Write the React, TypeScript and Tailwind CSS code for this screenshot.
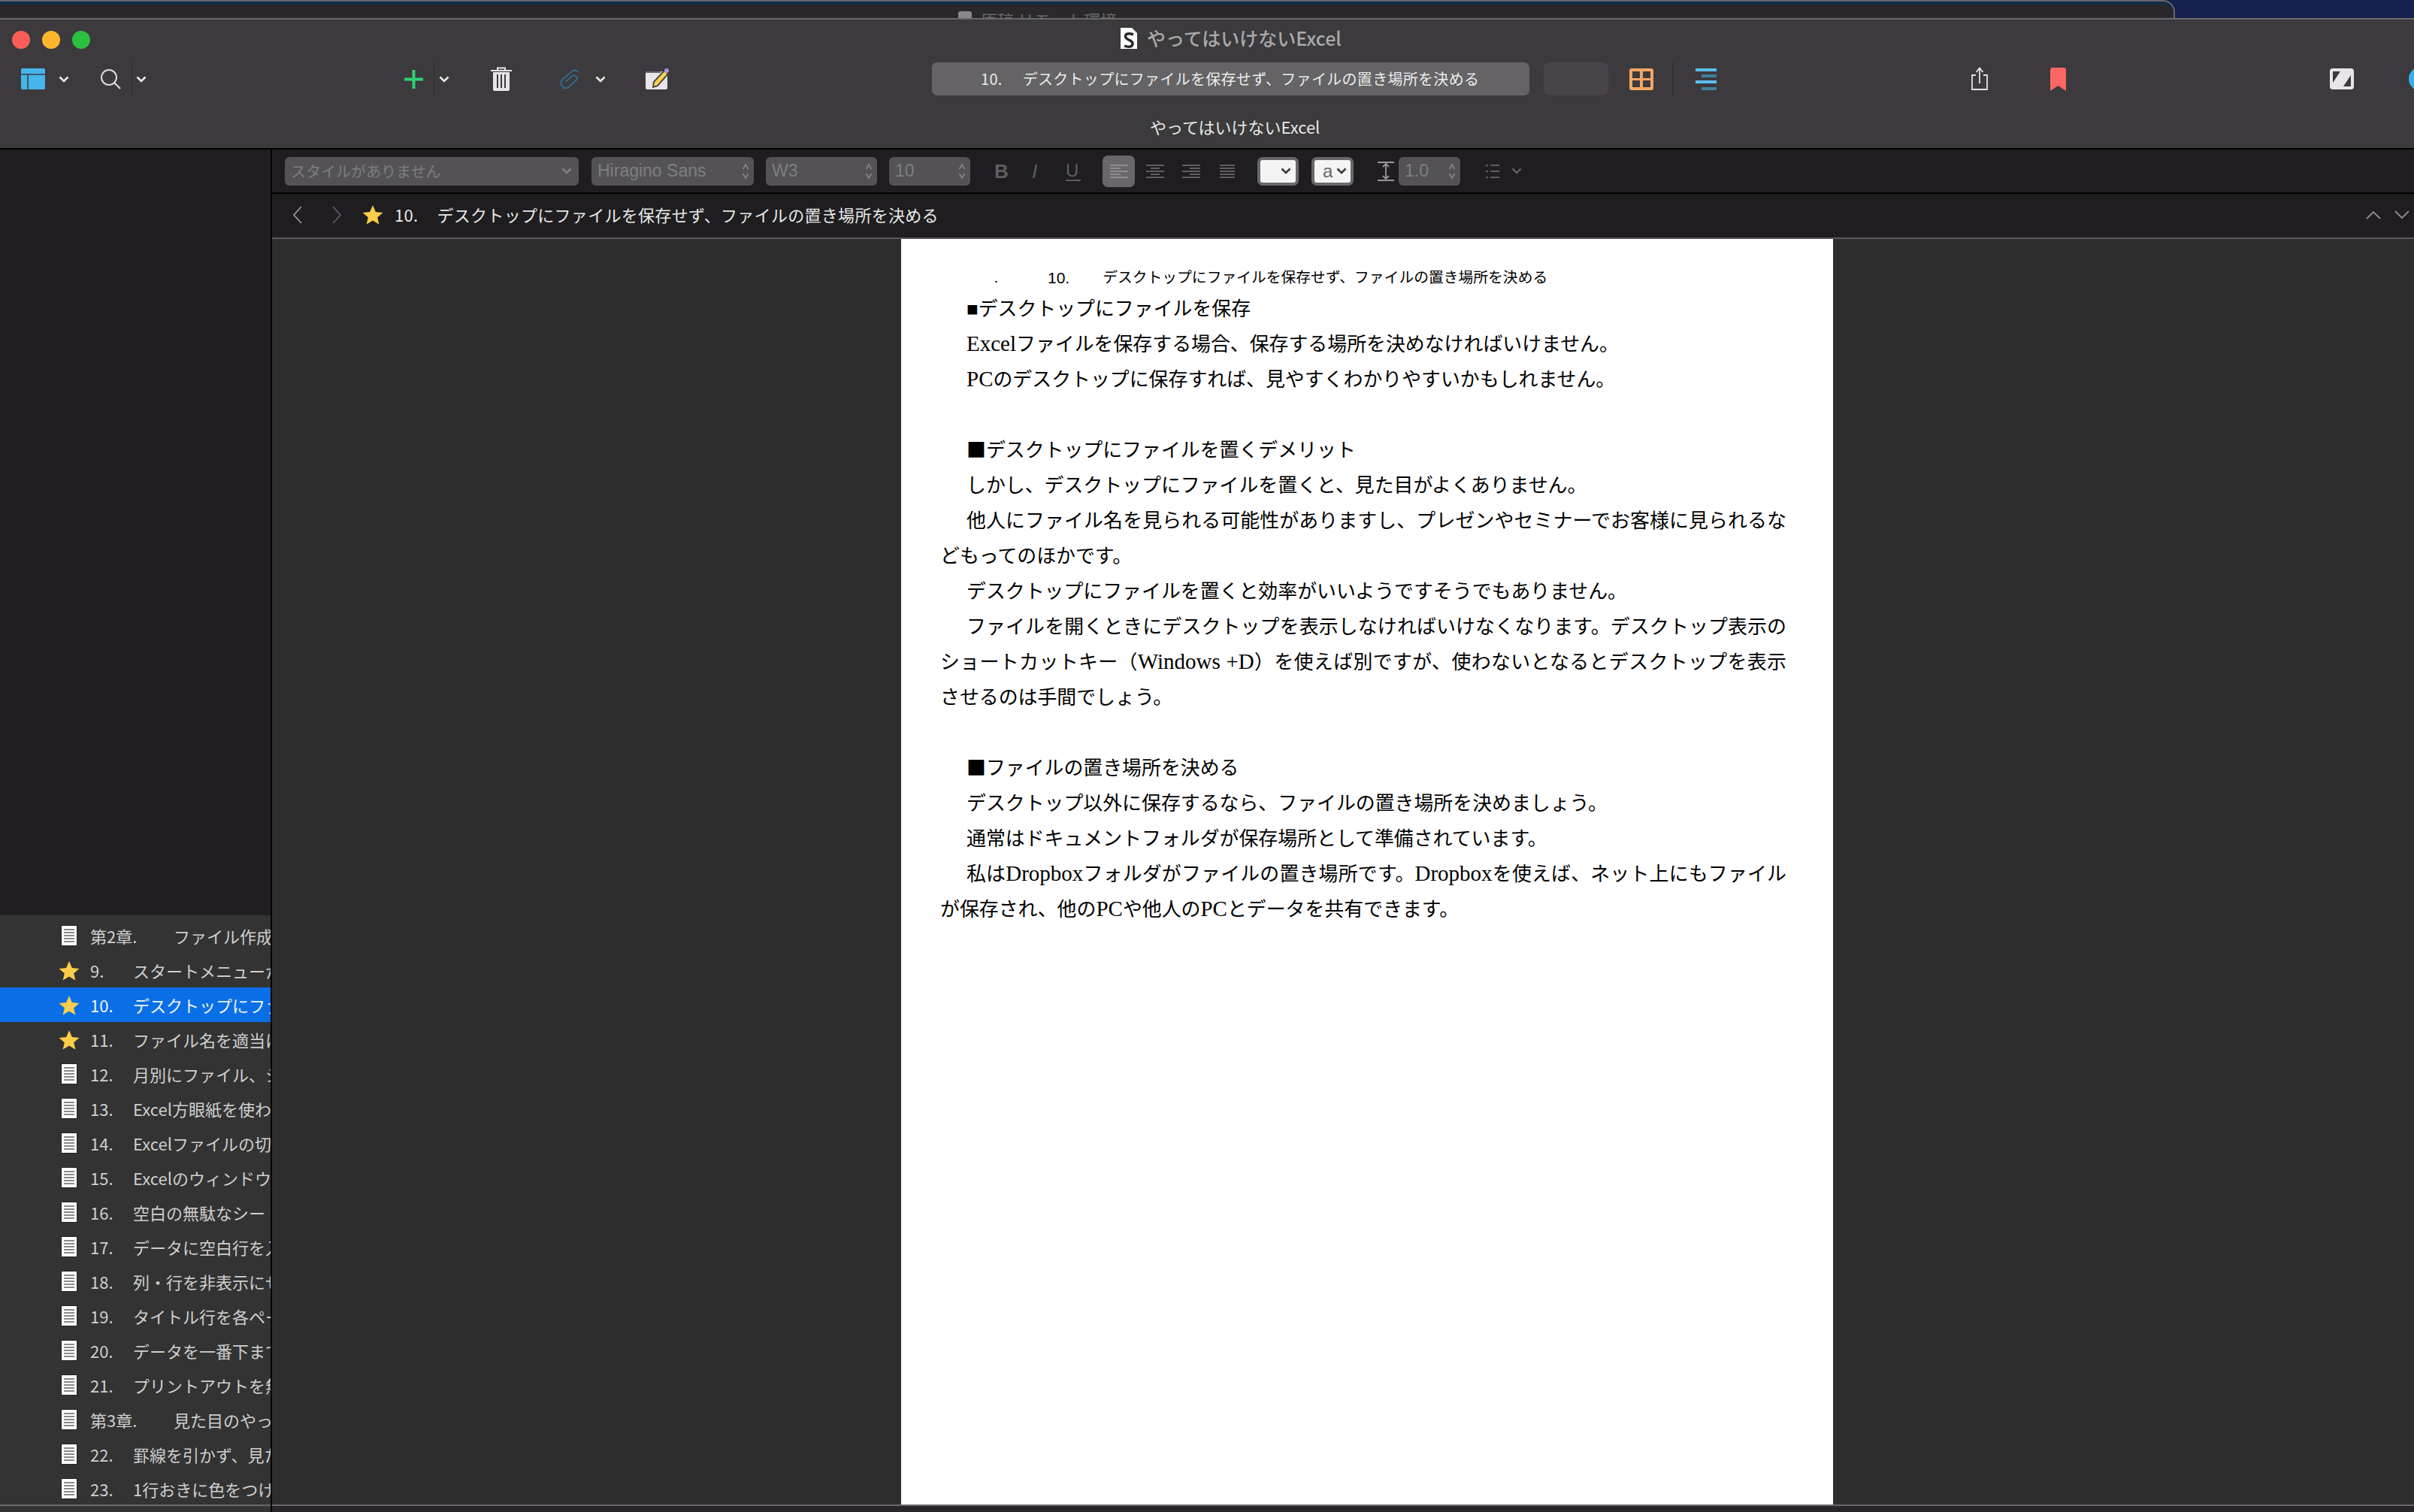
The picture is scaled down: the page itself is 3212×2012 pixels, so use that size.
import type { ReactNode } from "react";

const UI_FONT = "font-['Noto_Sans_CJK_JP',sans-serif]";

type Row = { num: string; title: string; star?: boolean; selected?: boolean; chapter?: boolean };

const rows: Row[] = [
  { num: "第2章.", title: "ファイル作成のルール", chapter: true },
  { num: "9.", title: "スタートメニューから", star: true },
  { num: "10.", title: "デスクトップにファイルを", star: true, selected: true },
  { num: "11.", title: "ファイル名を適当につけ", star: true },
  { num: "12.", title: "月別にファイル、シート" },
  { num: "13.", title: "Excel方眼紙を使わない" },
  { num: "14.", title: "Excelファイルの切り替え" },
  { num: "15.", title: "Excelのウィンドウを" },
  { num: "16.", title: "空白の無駄なシートを" },
  { num: "17.", title: "データに空白行を入れ" },
  { num: "18.", title: "列・行を非表示にせず" },
  { num: "19.", title: "タイトル行を各ページ" },
  { num: "20.", title: "データを一番下まで" },
  { num: "21.", title: "プリントアウトを無駄に" },
  { num: "第3章.", title: "見た目のやっつけ", chapter: true },
  { num: "22.", title: "罫線を引かず、見た目" },
  { num: "23.", title: "1行おきに色をつけ" },
];

function Chevron({ className = "", color = "#e8e8e8" }: { className?: string; color?: string }) {
  return (
    <svg viewBox="0 0 14 9" className={"h-[9px] w-[14px] shrink-0 " + className}>
      <path d="M1.5 1.5 7 7l5.500-5.500" fill="none" stroke={color} strokeWidth="2.600" />
    </svg>
  );
}

function UpDown({ className = "" }: { className?: string }) {
  return (
    <svg viewBox="0 0 10 24" className={"h-[24px] w-[10px] shrink-0 " + className}>
      <path d="M1.500 9 5 3l3.500 6M1.500 15 5 21l3.500-6" fill="none" stroke="#858387" strokeWidth="1.800" />
    </svg>
  );
}

function Divider({ className = "" }: { className?: string }) {
  return <div className={"h-[46px] w-px shrink-0 bg-[#2f2d30] " + className} />;
}

function Star({ className = "" }: { className?: string }) {
  return (
    <svg viewBox="0 0 30 28" className={"h-[27px] w-[30px] shrink-0 " + className}>
      <path
        d="M15 1l4 9.400 10 .9-7.600 6.500 2.300 9.700L15 22.400 6.300 27.500l2.300-9.700L1 11.300l10-.9z"
        fill="#fbcd4b"
      />
    </svg>
  );
}

function DocIcon() {
  return (
    <div className="flex h-[28px] w-[22px] shrink-0 flex-col justify-center gap-[2px] border border-[#222] bg-white px-[3px]">
      <div className="h-[2px] bg-[#8a8a8a]" />
      <div className="h-[2px] bg-[#8a8a8a]" />
      <div className="h-[2px] bg-[#8a8a8a]" />
      <div className="h-[2px] bg-[#8a8a8a]" />
      <div className="h-[2px] bg-[#8a8a8a]" />
    </div>
  );
}

function Field({ w, ml, children }: { w: string; ml: string; children: ReactNode }) {
  return (
    <div
      className={
        "flex h-[38px] shrink-0 items-center justify-between rounded-[6px] bg-[#545256] pl-[8px] pr-[6px] text-[23px] leading-none text-[#7f7d82] " +
        w +
        " " +
        ml
      }
    >
      {children}
    </div>
  );
}

function AlignIcon({ lines, className = "" }: { lines: string[]; className?: string }) {
  // each entry holds the width of one stroke
  return (
    <div className={"flex h-[18px] shrink-0 flex-col justify-between " + className}>
      {lines.map((l, i) => (
        <div key={i} className={"h-[2px] bg-[#5f5d61] " + l} />
      ))}
    </div>
  );
}

function SidebarRow({ row }: { row: Row }) {
  return (
    <div
      className={
        "flex h-[46px] shrink-0 items-center whitespace-nowrap text-[22px] " +
        (row.selected ? "bg-[#0a6fe6] text-[#f0f4fa]" : "text-[#cfcfcf]")
      }
    >
      <div className="ml-[76px] flex w-[32px] shrink-0 justify-center">
        {row.star ? <Star /> : <DocIcon />}
      </div>
      <span className={"ml-[12px] shrink-0 " + (row.chapter ? "w-[111px]" : "w-[57px]")}>{row.num}</span>
      <span className="shrink-0">{row.title}</span>
    </div>
  );
}

function Toolbar() {
  return (
    <div className="flex h-[44px] items-center pl-[28px]">
      <svg viewBox="0 0 32 28" className="h-[28px] w-[32px] shrink-0">
        <rect width="32" height="28" rx="2" fill="#45b5ec" />
        <path d="M0 8h32M9 8v20" stroke="#3c3a3c" strokeWidth="1.500" />
      </svg>
      <Chevron className="ml-[18px]" />
      <svg viewBox="0 0 28 28" className="ml-[41px] h-[28px] w-[28px] shrink-0">
        <circle cx="12" cy="12" r="10" fill="none" stroke="#dedcde" strokeWidth="2" />
        <path d="M19 19l8 8" stroke="#dedcde" strokeWidth="2.200" />
      </svg>
      <Divider className="ml-[14px]" />
      <Chevron className="ml-[5px]" />
      <svg viewBox="0 0 25 25" className="ml-[343px] h-[25px] w-[25px] shrink-0">
        <path d="M12.500 0v25M0 12.500h25" stroke="#2fcf73" strokeWidth="4" />
      </svg>
      <Divider className="ml-[14px]" />
      <Chevron className="ml-[6px]" />
      <svg viewBox="0 0 28 32" className="ml-[55px] h-[32px] w-[28px] shrink-0">
        <path d="M9 4V1.500h10V4M0 5h28" fill="none" stroke="#e6e4e6" strokeWidth="2" />
        <path d="M3 7h22v23a2 2 0 0 1-2 2H5a2 2 0 0 1-2-2z" fill="#e6e4e6" />
        <path d="M9 10v18M14 10v18M19 10v18" stroke="#3c3a3c" strokeWidth="2" />
      </svg>
      <svg viewBox="0 0 28 28" className="ml-[64px] h-[28px] w-[28px] shrink-0">
        <path
          d="M24 5c-2-3-5-3.500-8-1L4 14c-3 3-3 7-1 10s6 3 9 .5l9-8c2-2 2-4.500.5-6s-3.500-1.500-5.500 0l-8 7"
          fill="none"
          stroke="#33688a"
          strokeWidth="2.200"
        />
      </svg>
      <Chevron className="ml-[19px]" />
      <svg viewBox="0 0 32 28" className="ml-[53px] h-[28px] w-[32px] shrink-0">
        <path d="M0 4h23L11 18l-1 7 6-2 13-15v18a2 2 0 0 1-2 2H2a2 2 0 0 1-2-2z" fill="#e8e6e8" />
        <path d="M0 5h20" stroke="#3c3a3c" strokeWidth="1.500" />
        <path d="M25 3l5 4-14 16-6 2 1-7z" fill="#f5d04f" stroke="#3c3a3c" strokeWidth="1.800" />
        <circle cx="28" cy="3" r="3" fill="#b58ae6" />
      </svg>

      <div className="ml-[349px] flex h-[44px] w-[795px] shrink-0 items-center rounded-[7px] bg-[#656366] pl-[65px] text-[20px] tracking-[0.3px] text-[#ececec]">
        <span>10.</span>
        <span className="ml-[27px]">デスクトップにファイルを保存せず、ファイルの置き場所を決める</span>
      </div>
      <div className="ml-[19px] h-[44px] w-[86px] shrink-0 rounded-[7px] bg-[#474548]" />

      <svg viewBox="0 0 32 29" className="ml-[28px] h-[29px] w-[32px] shrink-0">
        <rect width="32" height="29" rx="3" fill="#f3a564" />
        <rect x="4" y="4" width="10" height="9" fill="#3c3a3c" />
        <rect x="18" y="4" width="10" height="9" fill="#3c3a3c" />
        <rect x="4" y="16" width="10" height="9" fill="#3c3a3c" />
        <rect x="18" y="16" width="10" height="9" fill="#3c3a3c" />
      </svg>
      <Divider className="ml-[25px]" />
      <svg viewBox="0 0 28 29" className="ml-[30px] h-[29px] w-[28px] shrink-0">
        <rect y="0" width="28" height="4" fill="#5cc0ee" />
        <rect x="8" y="8" width="20" height="4" fill="#447f9e" />
        <rect y="16" width="28" height="4" fill="#5cc0ee" />
        <rect x="8" y="25" width="20" height="4" fill="#447f9e" />
      </svg>
      <svg viewBox="0 0 24 32" className="ml-[338px] h-[32px] w-[24px] shrink-0">
        <path
          d="M7 11H2v19h20V11h-5M12 22V2M7.500 7 12 1.500 16.500 7"
          fill="none"
          stroke="#e4e2e4"
          strokeWidth="1.800"
        />
      </svg>
      <svg viewBox="0 0 21 31" className="ml-[82px] h-[31px] w-[21px] shrink-0">
        <path d="M3 0h15a3 3 0 0 1 3 3v28l-10.500-7L0 31V3a3 3 0 0 1 3-3z" fill="#fb6764" />
      </svg>
      <svg viewBox="0 0 32 28" className="ml-[351px] h-[28px] w-[32px] shrink-0">
        <rect width="32" height="28" rx="4" fill="#e8e6e8" />
        <path d="M4 4h10L4 19zM28 24H18L28 9z" fill="#3c3a3c" />
      </svg>
      <div className="ml-[73px] h-[32px] w-[32px] shrink-0 rounded-full bg-[#38aeea]" />
    </div>
  );
}

function FormatBar() {
  return (
    <div className="flex h-[57px] shrink-0 items-center bg-[#1f1d20] pl-[17px] font-['Liberation_Sans',sans-serif]">
      <Field w="w-[391px]" ml="">
        <span className={UI_FONT + " text-[20px]"}>スタイルがありません</span>
        <Chevron color="#858387" className="mr-[3px]" />
      </Field>
      <Field w="w-[216px]" ml="ml-[17px]">
        <span>Hiragino Sans</span>
        <UpDown />
      </Field>
      <Field w="w-[148px]" ml="ml-[16px]">
        <span>W3</span>
        <UpDown />
      </Field>
      <Field w="w-[108px]" ml="ml-[16px]">
        <span>10</span>
        <UpDown />
      </Field>
      <span className="ml-[32px] w-[20px] shrink-0 text-[26px] font-bold leading-none text-[#5f5d61]">B</span>
      <span className="ml-[30px] w-[16px] shrink-0 text-[26px] italic leading-none text-[#5f5d61]">I</span>
      <span className="ml-[29px] w-[20px] shrink-0 border-b-2 border-[#5f5d61] text-[24px] leading-none text-[#5f5d61]">U</span>
      <div className="ml-[29px] flex h-[42px] w-[43px] shrink-0 items-center justify-center rounded-[7px] bg-[#69676b]">
        <AlignIcon
          className="w-[24px] [&>div]:bg-[#8f8d91]"
          lines={["w-full", "w-[14px]", "w-full", "w-[14px]", "w-full"]}
        />
      </div>
      <AlignIcon
        className="ml-[15px] w-[24px] items-center"
        lines={["w-full", "w-[12px]", "w-full", "w-[12px]", "w-full"]}
      />
      <AlignIcon
        className="ml-[24px] w-[24px] items-end"
        lines={["w-full", "w-[14px]", "w-full", "w-[14px]", "w-full"]}
      />
      <AlignIcon
        className="ml-[26px] w-[20px]"
        lines={["w-full", "w-full", "w-full", "w-full", "w-full"]}
      />
      <div className="ml-[30px] flex h-[38px] w-[55px] shrink-0 items-center justify-end rounded-[7px] border-[4px] border-[#69676b] bg-[#f4f4f4] pr-[6px]">
        <Chevron color="#3a383b" className="h-[7px] w-[11px]" />
      </div>
      <div className="ml-[17px] flex h-[38px] w-[56px] shrink-0 items-center justify-between rounded-[7px] border-[4px] border-[#69676b] bg-[#f4f4f4] pl-[11px] pr-[5px]">
        <span className="text-[24px] leading-none text-[#69676b]">a</span>
        <Chevron color="#3a383b" className="h-[7px] w-[11px]" />
      </div>
      <svg viewBox="0 0 22 26" className="ml-[32px] h-[26px] w-[22px] shrink-0">
        <path d="M0 1h22M0 25h22M11 3v20M7 7l4-4 4 4M7 19l4 4 4-4" fill="none" stroke="#9a989c" strokeWidth="1.800" />
      </svg>
      <Field w="w-[82px]" ml="ml-[6px]">
        <span>1.0</span>
        <UpDown />
      </Field>
      <svg viewBox="0 0 18 22" className="ml-[34px] h-[22px] w-[18px] shrink-0">
        <path d="M6 3h12M6 11h12M6 19h12" stroke="#5f5d61" strokeWidth="2" />
        <circle cx="1.500" cy="3" r="1.500" fill="#5f5d61" />
        <circle cx="1.500" cy="11" r="1.500" fill="#5f5d61" />
        <circle cx="1.500" cy="19" r="1.500" fill="#5f5d61" />
      </svg>
      <Chevron color="#5f5d61" className="ml-[16px]" />
    </div>
  );
}

function NavBar() {
  return (
    <div className={"flex h-[58px] shrink-0 items-center bg-[#1f1d20] pb-[3px] text-[22px] tracking-[0.3px] text-[#e8e8e8] " + UI_FONT}>
      <svg viewBox="0 0 14 24" className="ml-[27px] h-[24px] w-[14px] shrink-0">
        <path d="M12 1 2 12l10 11" fill="none" stroke="#9a989c" strokeWidth="1.800" />
      </svg>
      <svg viewBox="0 0 14 24" className="ml-[38px] h-[24px] w-[14px] shrink-0">
        <path d="M2 1l10 11L2 23" fill="none" stroke="#5f5d61" strokeWidth="1.800" />
      </svg>
      <Star className="ml-[26px]" />
      <span className="ml-[14px] shrink-0">10.</span>
      <span className="ml-[25px] shrink-0">デスクトップにファイルを保存せず、ファイルの置き場所を決める</span>
      <svg viewBox="0 0 20 12" className="ml-[1899px] h-[12px] w-[20px] shrink-0">
        <path d="M1 11l9-9 9 9" fill="none" stroke="#8f8d91" strokeWidth="1.800" />
      </svg>
      <svg viewBox="0 0 20 12" className="ml-[18px] h-[12px] w-[20px] shrink-0">
        <path d="M1 1l9 9 9-9" fill="none" stroke="#8f8d91" strokeWidth="1.800" />
      </svg>
    </div>
  );
}

function Para({ children }: { children?: ReactNode }) {
  return <p className="min-h-[47px] text-justify [text-indent:35px]">{children}</p>;
}

// Latin words sit a little larger than the kana around them
function L({ children }: { children: ReactNode }) {
  return <span className="text-[29px] leading-none">{children}</span>;
}

function Square() {
  return <span className={UI_FONT + " leading-none"}>■</span>;
}

function Page() {
  return (
    <div className="ml-[837px] h-full w-[1240px] bg-white pl-[52px] pt-[35px] font-['Liberation_Serif','Noto_Sans_CJK_JP',serif] text-black">
      <div className="flex h-[35px] items-center pb-[2px] text-[19.800px] leading-none">
        <span className="ml-[72px]">.</span>
        <span className="ml-[66px] font-['Liberation_Sans',sans-serif] text-[21px]">10.</span>
        <span className="ml-[44px]">デスクトップにファイルを保存せず、ファイルの置き場所を決める</span>
      </div>
      <div className="w-[1126px] text-[25.900px] leading-[47px]">
        <Para>■デスクトップにファイルを保存</Para>
        <Para>
          <L>Excel</L>ファイルを保存する場合、保存する場所を決めなければいけません。
        </Para>
        <Para>
          <L>PC</L>のデスクトップに保存すれば、見やすくわかりやすいかもしれません。
        </Para>
        <Para />
        <Para>
          <Square />
          デスクトップにファイルを置くデメリット
        </Para>
        <Para>しかし、デスクトップにファイルを置くと、見た目がよくありません。</Para>
        <Para>他人にファイル名を見られる可能性がありますし、プレゼンやセミナーでお客様に見られるなどもってのほかです。</Para>
        <Para>デスクトップにファイルを置くと効率がいいようですそうでもありません。</Para>
        <Para>
          ファイルを開くときにデスクトップを表示しなければいけなくなります。デスクトップ表示のショートカットキー（<L>Windows +D</L>
          ）を使えば別ですが、使わないとなるとデスクトップを表示させるのは手間でしょう。
        </Para>
        <Para />
        <Para>
          <Square />
          ファイルの置き場所を決める
        </Para>
        <Para>デスクトップ以外に保存するなら、ファイルの置き場所を決めましょう。</Para>
        <Para>通常はドキュメントフォルダが保存場所として準備されています。</Para>
        <Para>
          私は<L>Dropbox</L>フォルダがファイルの置き場所です。<L>Dropbox</L>を使えば、ネット上にもファイルが保存され、他の<L>PC</L>や他人の<L>PC</L>とデータを共有できます。
        </Para>
      </div>
    </div>
  );
}

export default function App() {
  return (
    <div className={"flex h-[2012px] w-[3212px] flex-col overflow-hidden bg-[#2a282b] " + UI_FONT}>
      {/* window behind */}
      <div className="flex h-[24px] shrink-0 bg-[#16214e]">
        <div className="h-full w-[2894px] overflow-hidden rounded-tr-[16px] border-r-2 border-t-[2px] border-[#6a686a] bg-[#2a282b] shadow-[inset_0_4px_0_#122c4a]">
          <div className="ml-[1275px] mt-[12px] flex h-[12px] items-start gap-[12px] text-[22px] leading-[24px] text-[#6a686c]">
            <div className="mt-[1px] h-[12px] w-[18px] rounded-t-[3px] bg-[#8a888c]" />
            <span>原稿 リモート環境</span>
          </div>
        </div>
      </div>

      {/* header */}
      <div className="h-[175px] shrink-0 border-y-2 border-t-[#6a686a] border-b-black bg-[#3c3a3c]">
        <div className="flex h-[57px] items-center pb-[8px] pl-[16px]">
          <div className="mt-[4px] flex gap-[16px]">
            <div className="h-[24px] w-[24px] rounded-full bg-[#fa5f57]" />
            <div className="h-[24px] w-[24px] rounded-full bg-[#fdb52e]" />
            <div className="h-[24px] w-[24px] rounded-full bg-[#2ac13f]" />
          </div>
          <svg viewBox="0 0 22 28" className="ml-[1371px] h-[28px] w-[22px] shrink-0">
            <path d="M0 0h15l7 7v21H0z" fill="#fff" />
            <path d="M17 9C9 6 5 9 7 13s9 3 9 8-6 5-11 3" fill="none" stroke="#2a282b" strokeWidth="3.500" />
          </svg>
          <span className="ml-[13px] text-[25px] font-medium text-[#aaa8aa]">やってはいけないExcel</span>
        </div>
        <Toolbar />
        <div className="ml-[1530px] pt-[26px] text-[22px] leading-[30px] text-[#e8e8e8]">やってはいけないExcel</div>
      </div>

      {/* body */}
      <div className="flex min-h-0 flex-1">
        <div className="flex w-[360px] shrink-0 flex-col overflow-hidden bg-[#201e21]">
          <div className="flex-1" />
          <div className="h-[784px] shrink-0 overflow-hidden bg-[#333333] pt-[4px]">
            {rows.map((row) => (
              <SidebarRow key={row.num} row={row} />
            ))}
          </div>
          <div className="h-[2px] shrink-0 bg-[#6a686a]" />
          <div className="h-[8px] shrink-0 bg-[#333333]" />
        </div>
        <div className="w-[2px] shrink-0 bg-black" />
        <div className="flex min-w-0 flex-1 flex-col overflow-hidden">
          <FormatBar />
          <div className="h-[2px] shrink-0 bg-black" />
          <NavBar />
          <div className="h-[2px] shrink-0 bg-[#5a585a]" />
          <div className="min-h-0 flex-1 overflow-hidden bg-[#2d2d2d]">
            <Page />
          </div>
          <div className="h-[2px] shrink-0 bg-[#6a686a]" />
          <div className="h-[8px] shrink-0 bg-[#2a2528]" />
        </div>
      </div>
    </div>
  );
}
